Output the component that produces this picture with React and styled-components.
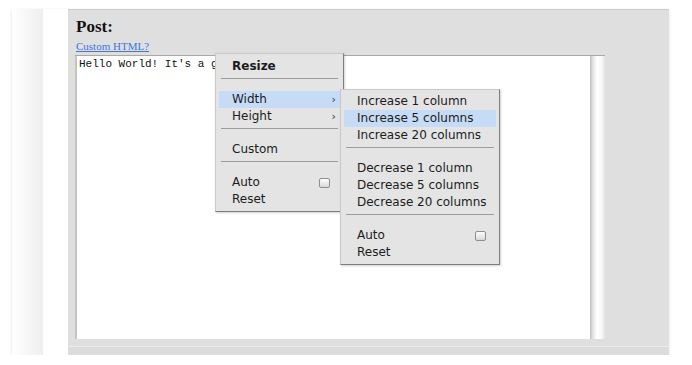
import styled, {createGlobalStyle} from "styled-components";

const GlobalStyle = createGlobalStyle`
  body {
    margin: 0;
    background: #fff;
  }
`;

const Page = styled.div`
  padding: 9px 0 0 12px;
`;

const Frame = styled.div`
  display: flex;
  width: 657px;
  height: 346px;
  box-shadow: 0 1px 3px rgba(0, 0, 0, 0.12);
`;

const Rail = styled.div`
  width: 31px;
  background: linear-gradient(to right, #fff 0%, #f8f8f8 45%, #eeeeee 100%);
`;

const Gutter = styled.div`
  width: 25px;
  background: #fff;
`;

const Main = styled.div`
  position: relative;
  flex: 1;
  display: flex;
  flex-direction: column;
  background: #dfdfdf;
  border-top: 1px solid #cbcbcb;
  padding-left: 7px;
`;

const Heading = styled.h2`
  margin: 8px 0 0 1px;
  font: bold 17px/18px "Liberation Serif", serif;
  color: #111;
`;

const Link = styled.a`
  margin: 4px 0 0 1px;
  align-self: flex-start;
  font: 11px/13px "Liberation Serif", serif;
  color: #3f74dc;
  text-decoration: underline;
`;

const Editor = styled.div`
  display: flex;
  width: 530px;
  height: 283px;
  margin-top: 2px;
  border-top: 1px solid #a9a9a9;
`;

const TextBox = styled.textarea`
  flex: 1;
  margin: 0;
  padding: 2px 2px 0;
  border: none;
  border-left: 2px solid #c4c4c4;
  background: #fff;
  resize: none;
  overflow: hidden;
  outline: none;
  font: 11px/13px "Liberation Mono", monospace;
  color: #111;
`;

const ScrollStrip = styled.div`
  width: 15px;
  background: linear-gradient(
    to right,
    #bdbdbd 0%,
    #e4e4e4 20%,
    #fff 45%,
    #fafafa 75%,
    #e2e2e2 100%
  );
`;

const Footer = styled.div`
  margin: auto 0 0 -7px;
  height: 8px;
  border-top: 1px solid #ebebeb;
  background: #dcdcdc;
`;

const Menu = styled.div`
  position: absolute;
  left: ${(p) => p.$left}px;
  top: ${(p) => p.$top}px;
  width: ${(p) => p.$width}px;
  box-sizing: border-box;
  padding: ${(p) => p.$padTop}px 3px 3px;
  background: #e4e4e4;
  border: 1px solid #c9c9c9;
  border-right-color: #7d7d7d;
  border-bottom-color: #7d7d7d;
  box-shadow: 1px 1px 2px rgba(0, 0, 0, 0.18);
  font: 12px/17px "DejaVu Sans", sans-serif;
  color: #1c1c1c;
  z-index: ${(p) => p.$layer};
`;

const Item = styled.div`
  display: flex;
  align-items: center;
  justify-content: space-between;
  height: 17px;
  padding: 0 10px 0 13px;
  background: ${(p) => (p.$active ? "#c6dcf6" : "transparent")};
  font-weight: ${(p) => (p.$title ? "bold" : "normal")};
  white-space: nowrap;
`;

const Arrow = styled.span`
  margin-right: -6px;
  font-size: 11px;
  color: #333;
`;

const Check = styled.span`
  width: 9px;
  height: 8px;
  border: 1px solid #8f8f8f;
  border-radius: 2px;
  background: linear-gradient(#fdfdfd, #d9d9d9);
`;

const Separator = styled.div`
  margin: 3px 2px 12px;
  border-top: 1px solid #9c9c9c;
`;

const App = () => {
  return (
    <>
      <GlobalStyle />
      <Page>
        <Frame>
          <Rail />
          <Gutter />
          <Main>
            <Heading>Post:</Heading>
            <Link href="#">Custom HTML?</Link>
            <Editor>
              <TextBox readOnly value="Hello World! It's a great day to write." />
              <ScrollStrip />
            </Editor>
            <Footer />

            <Menu $left={147} $top={43} $width={129} $padTop={4} $layer={1}>
              <Item $title>Resize</Item>
              <Separator />
              <Item $active>
                Width <Arrow>›</Arrow>
              </Item>
              <Item>
                Height <Arrow>›</Arrow>
              </Item>
              <Separator />
              <Item>Custom</Item>
              <Separator />
              <Item>
                Auto <Check />
              </Item>
              <Item>Reset</Item>
            </Menu>

            <Menu $left={272} $top={79} $width={160} $padTop={3} $layer={2}>
              <Item>Increase 1 column</Item>
              <Item $active>Increase 5 columns</Item>
              <Item>Increase 20 columns</Item>
              <Separator />
              <Item>Decrease 1 column</Item>
              <Item>Decrease 5 columns</Item>
              <Item>Decrease 20 columns</Item>
              <Separator />
              <Item>
                Auto <Check />
              </Item>
              <Item>Reset</Item>
            </Menu>
          </Main>
        </Frame>
      </Page>
    </>
  );
};

export default App;
